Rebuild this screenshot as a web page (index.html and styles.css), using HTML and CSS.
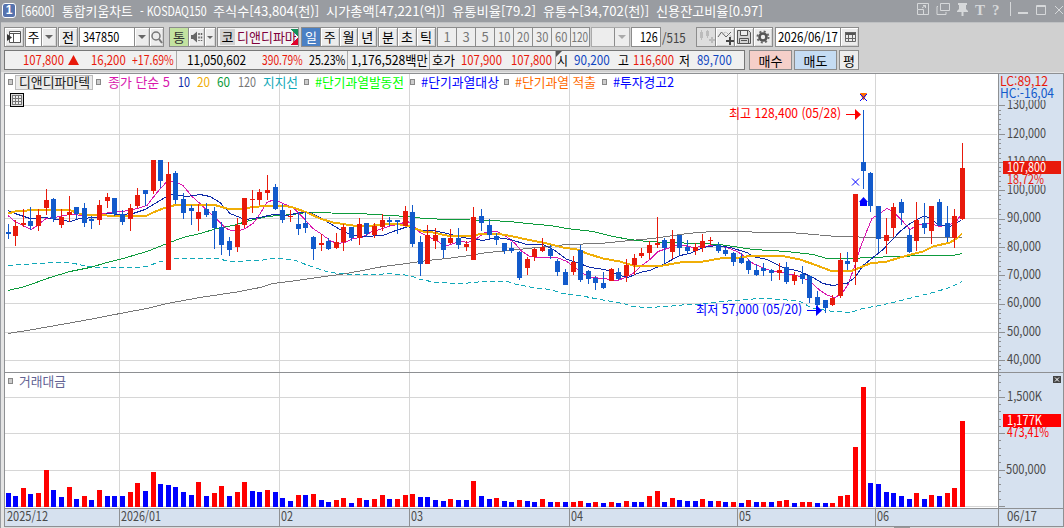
FILE: index.html
```html
<!DOCTYPE html>
<html lang="ko">
<head>
<meta charset="utf-8">
<title>통합키움차트</title>
<link rel="stylesheet" href="styles.css">
</head>
<body>
<div class="window">
  <header class="title">
    <span class="badge">1</span>
    <div class="title-text">
      <span data-w="34">[6600]</span><span data-w="71">통합키움차트</span><span data-w="67">- KOSDAQ150</span><span data-w="106">주식수[43,804(천)]</span><span data-w="119">시가총액[47,221(억)]</span><span data-w="84">유통비율[79.2]</span><span data-w="106">유통수[34,702(천)]</span><span data-w="107">신용잔고비율[0.97]</span>
    </div>
    <svg class="title-icons" width="152" height="22" viewBox="912 0 152 22" fill="none" stroke="#d6d8da" stroke-width="1">
      <path d="M917.500 9V3.500H928.500V14.500H923M917.500 9.500H923.500V14.500H917.500ZM922 8L925.500 5.500M923 5.500H925.500V8"/>
      <path d="M940.500 3.500H949.500V10.500H940.500ZM938 6.500H937V14.500H946V12"/>
      <path fill="#d6d8da" stroke="none" d="M958 3H967V5H966V9L968 11V12H963.500V16H961.500V12H957V11L959 9V5H958Z"/>
      <text class="ti" x="975" y="14.500">T</text><text class="ti" x="992" y="14.500">?</text>
      <path d="M1010.500 2V16"/><path stroke-width="2" d="M1018 13H1028"/><path d="M1036.500 5.500H1045.500V14.500H1036.500ZM1036 6.500H1046M1055 6L1063 14M1063 6L1055 14"/>
    </svg>
  </header>

  <div class="tools">
    <div class="group g1"><b class="btn"><svg width="16" height="16"><path d="M3.500 2.500H14.500V13.500H3.500ZM3 4.500H14M7.500 4V13" fill="#fff" stroke="#555"/><path d="M1 5L6 8.500L1 12Z" fill="#333"/></svg></b></div>
    <div class="group g2"><b class="white">주</b><b class="btn arr"></b></div>
    <div class="group g3"><b class="btn">전</b></div>
    <div class="group g4"><b class="white"><span data-w="36">347850</span></b><b class="btn arr"></b><b class="btn"><svg width="14" height="16" fill="none" stroke="#777"><circle cx="6" cy="7" r="4" stroke-width="1.500"/><path d="M9 10L12 14" stroke-width="2"/></svg></b></div>
    <div class="group g5"><b class="green">통</b><b class="btn"><svg width="14" height="14"><path d="M1 5H3L7 1.500V12.500L3 9H1Z" fill="#666"/><path d="M9 3V11M11.500 3V11" stroke="#666" stroke-width="1.500" stroke-dasharray="2 1.500"/></svg></b><b class="btn arr small"></b></div>
    <div class="group g6"><b class="kos">코</b><span class="stock">디앤디파마</span><i class="flag"></i></div>
    <div class="group g7"><b class="blue">일</b><b class="btn">주</b><b class="btn">월</b><b class="btn">년</b></div>
    <div class="group g8"><b class="btn">분</b><b class="btn">초</b><b class="btn">틱</b></div>
    <div class="group g9"><b>1</b><b>3</b><b>5</b><b><span data-w="12">10</span></b><b><span data-w="12">20</span></b><b><span data-w="12">30</span></b><b><span data-w="12">60</span></b><b><span data-w="17">120</span></b></div>
    <div class="group g10"><b></b><b class="arr off"></b></div>
    <div class="group g11"><b class="white"><span data-w="18">126</span></b></div>
    <div class="total"><span data-w="24">/515</span></div>
    <div class="group g12"><b class="off"><svg width="17" height="17" fill="#bbb"><path d="M2 3H5V9H2ZM3 1H4V11H3ZM8 2H11V7H8ZM9 1H10V9H9ZM13 8H15V10H17V12H15V14H13V12H11V10H13Z"/></svg></b><b class="btn"><svg width="17" height="17"><path d="M1 8L4.500 3L9 8L14 3" fill="none" stroke="#666"/><path d="M5 5L9 3L12 6L15 8" fill="none" stroke="#999" stroke-dasharray="1 1"/><path d="M12 8H14V11H17V13H14V16H12V13H9V11H12Z" fill="#444"/></svg></b><b class="btn"><svg width="16" height="16" fill="none" stroke="#555"><path d="M1.500 1.500H12.500L14.500 3.500V14.500H1.500ZM4.500 2V6.500H11.500V2M3.500 14V9.500H12.500V14M5 11.500H11" fill="#d4d4d4"/></svg></b><b class="btn"><svg width="16" height="16"><circle cx="8" cy="8" r="3.500" fill="none" stroke="#555" stroke-width="2.600"/><circle cx="8" cy="8" r="5.500" fill="none" stroke="#666" stroke-width="2" stroke-dasharray="2 2.320"/></svg></b></div>
    <div class="group g13"><b class="white"><span data-w="60">2026/06/17</span></b><b class="btn"><svg width="14" height="14"><path d="M2 2H13V5H2Z" fill="#555"/><path d="M2.500 2.500H12.500V11.500H2.500ZM5.500 5V11M9.500 5V11M3 8.500H12" fill="none" stroke="#666"/></svg></b></div>
  </div>

  <div class="quote">
    <div class="prices">
      <span class="r" data-w="41">107,800</span><svg width="12" height="18"><path d="M0 14L5.500 4L11 14Z" fill="#e81a0c"/></svg><span class="r" data-w="35">16,200</span><span class="r" data-w="42">+17.69%</span><i></i>
      <span data-w="59">11,050,602</span><span class="r" data-w="41">390.79%</span><span data-w="36">25.23%</span><i></i><span data-w="77">1,176,528백만</span><i></i>
      <span data-w="23">호가</span><span class="r" data-w="41">107,900</span><span class="r" data-w="41">107,800</span><i class="corner"></i><span data-w="11">시</span><span class="b" data-w="36">90,200</span><span data-w="11">고</span><span class="r" data-w="41">116,600</span><span data-w="11">저</span><span class="b" data-w="35">89,700</span>
    </div>
    <button class="buy">매수</button><button class="sell">매도</button><button class="avg">평</button>
  </div>

  <main class="chart"><svg id="chart" width="1064" height="456" viewBox="0 72 1064 456"></svg></main>
</div>
<script src="chart.js"></script>
</body>
</html>
```

FILE: styles.css
```css
* { box-sizing: border-box; }
body { margin: 0; overflow: hidden; background: #d0d0d0; font-family: "Noto Sans CJK KR", sans-serif; font-size: 13px; color: #000; }
[data-w] { display: inline-block; justify-self: start; transform-origin: left center; white-space: nowrap; }
.window { width: 1064px; height: 528px; display: flex; flex-direction: column; border-left: 1px solid #999ca1; background: #d0d0d0; }
.title { height: 22px; flex: none; display: flex; align-items: center; margin-left: -1px; background: #999ca1; color: #fff; }
.badge { width: 14px; height: 15px; margin: 0 5px 1px 2px; border: 1px solid #fff; border-radius: 3px; background: #5673ae; font: bold 12px/13px "Liberation Sans", sans-serif; text-align: center; }
.title-text { flex: none; width: 891px; display: grid; grid-template-columns: 41px 78px 73px 113px 126px 91px 113px 1fr; line-height: 19px; padding-bottom: 1px; }
.title-icons { flex: none; }
.ti { font: bold 15px "Liberation Serif", serif; fill: #d6d8da; stroke: none; }

.tools { height: 26px; flex: none; display: flex; align-items: flex-end; padding-left: 3px; border-top: 1px solid #bfc1c3; padding-bottom: 1px; }
.group { height: 20px; display: flex; border: 1px solid #8c8c8c; background: #ededed; flex: none; margin-right: 1px; overflow: hidden; }
.group b { font-weight: normal; flex: 1 1 0; min-width: 0; display: flex; align-items: center; justify-content: center; line-height: 16px; white-space: nowrap; }
.group b + b { border-left: 1px solid #8c8c8c; }
.btn { background: #ececec; box-shadow: inset 1px 1px #fff, inset -1px -1px #d4d4d4; }
.group .arr { flex: 0 0 15px; }
.group .arr::after { content: ""; border: 4px solid transparent; border-top-color: #666; border-bottom: 0; }
.group .arr.off::after { border-top-color: #aaa; }
.white { background: #fff; }
.g1 { width: 20px; } .g2 { width: 32px; } .g3 { width: 20px; }
.g4 { width: 85px; margin-right: 5px; }
.g4 .white { flex: 0 0 54px; justify-content: flex-start; padding-left: 3px; }
.g5 { width: 47px; } .g5 .green { background: #c3e3a0; color: #333; flex: 0 0 18px; } .g5 .arr { flex: 0 0 11px; } .group .arr.small::after { border-width: 3px 3px 0; }
.g6 { width: 82px; position: relative; background: #f3f3f3; margin-right: 2px; }
.g6 .kos { flex: 0 0 15px; margin: 1px 2px; background: #d2d2d2; }
.stock { width: 59px; color: #80003c; line-height: 17px; white-space: nowrap; overflow: hidden; }
.flag { position: absolute; right: 0; top: 1px; width: 8px; height: 16px; background: linear-gradient(225deg, #14905a 5px, transparent 5.5px), linear-gradient(315deg, #e0002a 5px, transparent 5.5px); }
.g7 { width: 76px; } .g7 .blue { background: #4a80c4; color: #fff; }
.g8 { width: 58px; }
.g9 { width: 153px; color: #777; background: #eee; }
.group.g9 b span, .group.g11 b span { transform-origin: center; }
.g10 { width: 39px; border-color: #aaa; }
.g11 { width: 30px; margin-right: 0; } .group.g11 b { justify-content: flex-end; }
.total { width: 35px; padding-left: 1px; line-height: 19px; color: #444; }
.g12 { width: 77px; margin-right: 2px; } .g12 .off { background: #ddd; flex: 0 0 18px; }
.g13 { width: 84px; } .g13 .white { flex: 0 0 64px; justify-content: flex-start; padding-left: 2px; }

.quote { height: 24px; flex: none; display: flex; align-items: flex-start; padding: 2px 0 0 3px; }
.prices { width: 741px; height: 20px; padding-left: 18px; border: 1px solid #777; background: #f0f0f0; display: grid; grid-template-columns: 45px 23px 41px 44px 11px 75px 47px 38px 4px 78px 3px 29px 50px 44px 2px 17px 44px 15px 46px 18px 1fr; line-height: 18px; white-space: nowrap; }
.prices i { border-left: 1px solid #aaa; }
.prices .corner { width: 7px; background: linear-gradient(135deg, #555 4px, transparent 4.5px); }
.prices svg { display: block; }
.r { color: #e81a0c; } .b { color: #1046c0; }
.quote button { height: 20px; padding: 0; border: 1px solid #8c8c8c; font: inherit; line-height: 17px; }
.quote .buy { width: 43px; margin-left: 4px; background: #f5cfc9; }
.quote .sell { width: 43px; margin-left: 2px; background: #c5dcf3; }
.quote .avg { width: 20px; margin-left: 2px; background: #ededed; }

.chart { flex: none; margin-left: -1px; height: 456px; }
.chart svg { display: block; }
.chart text { font-size: 13px; }
.grid { stroke: #d6d6d6; }
.frame { stroke: #8e9093; fill: none; }
.tick { stroke: #8e9093; }
.up { fill: #e81a0c; } .down { fill: #125acb; }
.vup { fill: #f00; } .vdown { fill: #00f; }
.line { fill: none; stroke-width: 1; }
.line.thick { stroke-width: 2; }
```

FILE: chart.js
```javascript
// Condense toolbar and quote labels to their column widths
for (const el of document.querySelectorAll('[data-w]'))
  el.style.transform = `scaleX(${el.dataset.w / el.offsetWidth})`;

const NS = 'http://www.w3.org/2000/svg';
const root = document.getElementById('chart');

function add(tag, attrs, content) {
  const el = document.createElementNS(NS, tag);
  for (const key in attrs) el.setAttribute(key, attrs[key]);
  if (content !== undefined) el.textContent = content;
  root.appendChild(el);
  return el;
}
const rect = (x, y, w, h, fill, extra = {}) => add('rect', { x, y, width: w, height: h, fill, ...extra });
const line = (x1, y1, x2, y2, cls) => add('path', { d: `M${x1} ${y1}L${x2} ${y2}`, class: cls, 'shape-rendering': 'crispEdges' });
const label = (x, y, width, str, fill) =>
  add('text', { x, y, fill, textLength: width, lengthAdjust: 'spacingAndGlyphs' }, str);
const AXIS = '#d6e1ef', INK = '#4a4a4a';

// Panels
rect(0, 72, 1064, 456, '#e4e4e4');
rect(0, 72, 1, 456, '#999ca1');
rect(5, 74, 993, 434, '#fff');
rect(998, 74, 65, 452, AXIS);
rect(5, 508, 993, 18, AXIS);

// Grid
for (const y of [105, 134, 162, 190, 218, 247, 275, 303, 332, 360, 397, 433, 470, 506]) line(5, y + .5, 997, y + .5, 'grid');
for (const x of [119, 279, 409, 569, 737, 875]) line(x + .5, 74, x + .5, 508, 'grid');

// Candles: direction, high, body top, body bottom, low, turnover bar top
const candles = `b224 232 234 239 493|r220 226 236 246 496|r209 223 225 227 488|b207 221 226 230 494|r209 215 226 231 493|r189 200 208 215 470|b198 199 219 222 490|r209 217 225 228 497|r196 212 215 222 487|b207 207 214 219 499|b203 208 223 227 496|b216 219 221 229 500|r200 205 220 225 490|r193 197 201 208 496|b198 198 214 216 496|b210 214 222 225 496|r204 208 219 231 492|r188 195 206 208 483|b190 190 194 206 491|r160 160 191 194 472|b160 160 181 188 484|r162 174 270 270 485|b171 173 200 204 487|b193 199 213 219 492|b205 208 211 225 495|r204 212 219 231 482|b203 209 215 217 496|b207 211 228 249 493|b222 227 245 255 486|b237 241 250 256 496|r218 225 247 252 492|r198 198 225 228 482|r190 199 200 213 491|r189 192 200 205 492|r175 190 193 200 490|b184 187 209 210 492|b204 210 220 223 498|r210 216 217 222 501|b212 224 229 235 495|b212 223 228 233 495|b236 237 249 260 494|r234 243 245 251 500|b238 241 249 250 502|r233 242 248 249 500|r224 227 242 251 498|b227 227 238 241 503|r218 224 238 245 498|b223 223 234 237 500|r223 226 235 238 499|r214 220 227 231 495|b217 220 222 226 499|b220 220 222 234 499|r206 211 226 226 495|b205 212 244 247 494|b236 242 264 276 497|r225 235 264 264 497|r228 235 241 249 500|b238 238 250 258 501|r229 238 243 244 499|b228 238 245 249 500|r241 244 247 251 500|r207 217 260 260 481|b209 216 223 231 496|b219 225 235 239 499|b233 236 240 245 498|b243 243 251 254 501|b242 248 251 253 502|b251 252 278 280 500|r257 259 268 275 501|r248 249 257 261 502|r238 247 251 252 499|b245 249 256 259 502|b259 261 272 276 502|b269 272 285 285 502|r256 262 272 275 502|b245 250 280 282 501|b270 271 279 284 503|b276 278 283 290 502|b272 283 288 289 503|r268 269 281 281 502|b268 272 279 280 503|r259 265 276 282 501|r254 258 265 275 502|r248 253 256 258 502|r241 245 253 259 496|r217 243 245 248 491|b238 240 248 263 502|r230 239 252 259 498|b235 235 248 255 500|b240 247 251 253 501|r243 247 251 255 501|r234 241 248 252 499|r237 240 241 245 501|b242 245 251 253 501|b247 250 254 256 502|b252 253 262 266 502|b253 258 263 264 503|b259 261 270 274 500|b264 270 275 276 502|b263 268 271 276 502|b269 270 273 281 502|r263 270 273 280 501|b262 267 282 284 500|r272 275 281 285 503|b266 274 279 284 502|b275 276 298 303 502|b291 297 305 309 503|b300 300 308 313 503|r295 298 305 306 503|r253 260 296 298 496|b252 261 264 270 495|r194 194 262 285 447|b110 162 171 189 387|b172 173 206 212 483|b206 206 239 252 484|r218 235 241 254 492|r203 207 228 237 493|b199 202 213 225 496|b229 235 252 253 499|r202 220 241 251 493|b203 223 228 234 499|r206 206 231 244 495|b199 202 226 226 496|b206 223 237 242 493|r209 216 238 248 488|r143 168 219 220 421`.split('|');

// Turnover direction compares with the previous day, so it is listed apart from the candle direction
const turnover = [
  'bbrbrrbbrb', 'rbrbbbrrbr', 'bbbbbrbrrb', 'rrbbrbbbrb', 'rbbrrbrbrr', 'brrrbbbbrb', 'brbbrbbrbb',
  'rbrbrrbrbr', 'brbbrrbrbb', 'brbrbrbrbr', 'brrbrrbbrr', 'rrrbbbbbbr', 'brbrrr'
].join('');

const leftOf = i => 6 + Math.floor(i * 7.636);

// Indicator curves as flat x,y lists
const curves = [
  ['#777', 'line', '8,333 33,329 67,323 100,317 120,313 147,308 167,303 200,297 220,294 240,291 260,287 273,283 297,280 317,277 340,274 363,270 383,266 407,263 427,260 447,258 470,255 487,252 510,250 527,248 567,244 600,243 620,241 653,238 667,236 687,233 713,231 790,232 837,236 880,237 962,237'],
  ['#0d9b3c', 'line', '8,290 25,286 50,277 70,271 90,267 107,262 123,258 147,251 167,243 183,237 200,233 217,228 233,225 250,220 267,216 293,214 307,212 355,213 378,214 387,215 410,216 423,218 450,219 490,220 510,221 527,223 550,225 567,228 593,231 613,236 630,239 647,241 667,242 700,243 720,244 740,247 753,249 787,251 813,254 827,258 853,258 867,257 900,256 920,255 953,255 962,253'],
  ['#10a8b8', 'line', '8,265 20,264 43,263 53,262 70,262 83,265 97,267 117,267 140,267 147,266 160,261 177,258 193,258 217,258 230,261 260,260 273,258 293,259 303,263 320,269 330,272 350,274 377,274 390,273 410,275 420,279 437,282 463,283 483,281 507,281 517,284 533,287 550,289 563,293 580,295 600,299 623,303 633,306 647,307 667,306 687,304 700,304 713,302 733,300 760,298 783,299 800,301 813,308 827,310 833,311 850,312 863,308 880,305 897,301 913,297 933,292 950,287 962,281', '5 3'],
  ['#d817ad', 'line', '8,215 15,221 23,225 31,229 36,226 46,218 55,217 63,215 72,214 83,215 100,214 110,212 122,211 128,210 137,208 147,205 157,192 167,181 175,181 183,185 192,196 200,203 208,211 217,219 223,225 228,229 237,231 245,228 253,223 257,218 267,202 274,199 283,203 293,207 303,217 313,228 322,234 330,240 337,243 345,242 353,238 362,237 372,231 380,229 388,226 397,224 408,221 413,225 420,232 428,236 437,240 445,246 453,243 462,241 468,242 477,238 485,232 497,231 505,235 515,243 522,251 530,256 540,257 557,257 567,261 575,267 583,273 592,277 603,278 618,280 625,277 633,273 642,265 650,259 658,251 667,248 680,244 693,247 703,246 713,245 727,247 737,251 745,256 753,263 760,266 770,270 787,273 800,276 810,281 820,290 828,295 835,297 842,293 848,284 855,265 860,248 867,230 872,218 878,214 887,208 893,211 902,220 910,229 918,224 930,223 940,226 950,224 957,220 961,214'],
  ['#0f2ba8', 'line', '8,210 15,213 30,218 45,217 57,219 70,221 80,218 97,217 107,213 122,214 133,213 145,209 155,203 170,194 187,196 200,194 210,196 220,202 230,213 245,219 260,217 273,214 287,215 300,212 310,212 320,217 330,223 340,229 350,234 363,236 383,235 393,231 408,226 420,230 433,230 447,233 463,237 483,240 497,237 510,239 527,244 543,244 555,250 567,259 577,262 590,267 605,269 620,275 628,277 640,272 650,270 663,264 680,255 690,253 703,247 717,245 730,247 747,252 753,256 767,259 783,267 800,271 813,277 823,283 833,285 847,283 855,277 863,265 873,257 883,249 900,231 910,223 923,216 930,217 938,224 950,226 961,220'],
  ['#f0ae08', 'line thick', '8,213 15,211 27,210 47,209 68,209 82,214 107,215 147,215 153,212 163,208 177,204 213,204 227,208 242,208 267,205 283,205 293,207 307,212 320,218 333,222 353,225 373,225 387,223 400,224 410,226 423,231 433,232 447,235 473,235 483,233 497,233 513,236 527,239 547,243 563,247 577,249 587,253 603,258 620,261 633,265 663,265 680,262 703,261 720,258 740,257 753,255 780,255 800,259 817,265 830,270 850,271 860,267 870,263 887,261 907,255 923,251 933,246 950,242 957,238 962,233']
];
function drawCurve([stroke, cls, points, dash]) {
  const attrs = { points, stroke, class: cls, transform: 'translate(0 .5)', 'shape-rendering': 'crispEdges' };
  if (dash) attrs['stroke-dasharray'] = dash;
  add('polyline', attrs);
}
curves.forEach(drawCurve);

candles.forEach((row, i) => {
  const [high, top, bottom, low, vol] = row.slice(1).split(' ').map(Number);
  const x = leftOf(i), cls = row[0] === 'r' ? 'up' : 'down';
  add('rect', { x: x + 2, y: high, width: 1, height: low - high, class: cls });
  add('rect', { x, y: top, width: 5, height: bottom - top, class: cls });
  add('rect', { x, y: vol, width: 5, height: 507 - vol, class: turnover[i] === 'r' ? 'vup' : 'vdown' });
});

// Frames and axis ticks
add('path', { d: 'M4.500 526.500V73.500H1063.500V526.500H4.500M4 372.500H1063M4 508.500H1063M998.500 74V526M119.500 508V526M279.500 508V526M409.500 508V526M569.500 508V526M737.500 508V526M875.500 508V526', class: 'frame', 'shape-rendering': 'crispEdges' });
for (let k = 0; k < 10; k++) {
  const y = Math.round(105.4 + k * 28.31) + .5;
  line(999, y, 1005, y, 'tick');
  for (let m = 1; m < 6; m++) if (y + m * 4.72 < 371) line(999, Math.floor(y + m * 4.72) + .5, 1001, Math.floor(y + m * 4.72) + .5, 'tick');
}
for (let k = 0; k < 19; k++) {
  const y = Math.round(506 - k * 7.28) + .5;
  line(999, y, k % 5 ? 1001 : 1005, y, 'tick');
}

// Price axis
[['130,000', 109], ['120,000', 138], ['110,000', 166], ['100,000', 194], ['90,000', 222], ['80,000', 251], ['70,000', 279], ['60,000', 307], ['50,000', 336], ['40,000', 364]]
  .forEach(([s, y]) => label(1007, y, s.length === 7 ? 39 : 34, s, INK));
rect(999, 75, 64, 25, AXIS);
label(1000, 86, 48, 'LC:89,12', '#e81a0c');
label(1000, 98, 54, 'HC:-16,04', '#125acb');
rect(1007, 174, 40, 11, AXIS);
rect(1003, 161, 58, 13, '#e81a0c');
label(1007, 172, 39, '107,800', '#fff');
label(1007, 184, 37, '18,72%', '#e81a0c');

// Turnover axis
label(1007, 401, 35, '1,500K', INK);
rect(1003, 414, 58, 13, '#f00');
label(1007, 425, 35, '1,177K', '#fff');
label(1007, 437, 42, '473,41%', '#f00');
label(1006, 474, 40, '500,000', INK);
rect(1053, 376, 8, 7, '#444');
add('path', { d: 'M1055 377.500L1059 381.500M1059 377.500L1055 381.500', stroke: '#fff' });

// Date axis
[[7, 41, '2025/12'], [121, 40, '2026/01'], [281, 12, '02'], [411, 12, '03'], [571, 12, '04'], [739, 12, '05'], [877, 12, '06'], [1007, 30, '06/17']]
  .forEach(([x, w, s]) => label(x, 521, w, s, INK));

// Legend
rect(15.500, 75.500, 77, 14, '#ebebeb', { stroke: '#bbb' });
for (const [x, y] of [[8, 79], [96, 79], [304, 79], [410, 79], [504, 79], [602, 79], [8, 378]])
  rect(x + .5, y + .5, 4, 5, '#ccc', { stroke: '#888' });
[[19, 71, '디앤디파마텍', '#222'], [108, 62, '종가 단순 5', '#d817ad'], [178, 12, '10', '#0f2ba8'], [197, 13, '20', '#f0ae08'], [217, 13, '60', '#0d9b3c'], [238, 18, '120', '#777'], [263, 35, '지지선', '#10a8b8'], [315, 89, '#단기과열발동전', '#0f0'], [421, 78, '#단기과열대상', '#00f'], [515, 81, '#단기과열 적출', '#ff6a00'], [613, 61, '#투자경고2', '#00f']]
  .forEach(([x, w, s, c]) => label(x, 87, w, s, c));
label(19, 386, 47, '거래대금', '#636394');
add('path', { d: 'M10.500 93.500H23.500V106.500H10.500Z', fill: '#ddd', stroke: '#000', 'shape-rendering': 'crispEdges' });
add('path', { d: 'M12.500 95.500H21.500V104.500H12.500ZM12 98.500H22M12 101.500H22M15.500 95V105M18.500 95V105', fill: '#eee', stroke: '#777', 'shape-rendering': 'crispEdges' });

// High and low annotations with signal marks
label(729, 118, 112, '최고 128,400 (05/28)', '#f00');
add('path', { d: 'M846 114H855V109L861 114.500L855 120V115H846Z', fill: '#f00' });
label(696, 314, 106, '최저 57,000 (05/20)', '#00f');
add('path', { d: 'M807 310H816V305L822 310.500L816 316V311H807Z', fill: '#00f' });
add('path', { d: 'M860 93H867L864 100H863Z', fill: '#ff6a00' });
add('path', { d: 'M860 94L867 101M867 94L860 101M852 178.500L859 185.500M859 178.500L852 185.500', stroke: '#00f' });
add('path', { d: 'M863.500 197L868 202H867V206H860V202H859Z', fill: '#00f' });

// Scrollbar edge
rect(5, 527, 1058, 1, '#dcdcdc');
rect(894, 527, 16, 1, '#999');
```
